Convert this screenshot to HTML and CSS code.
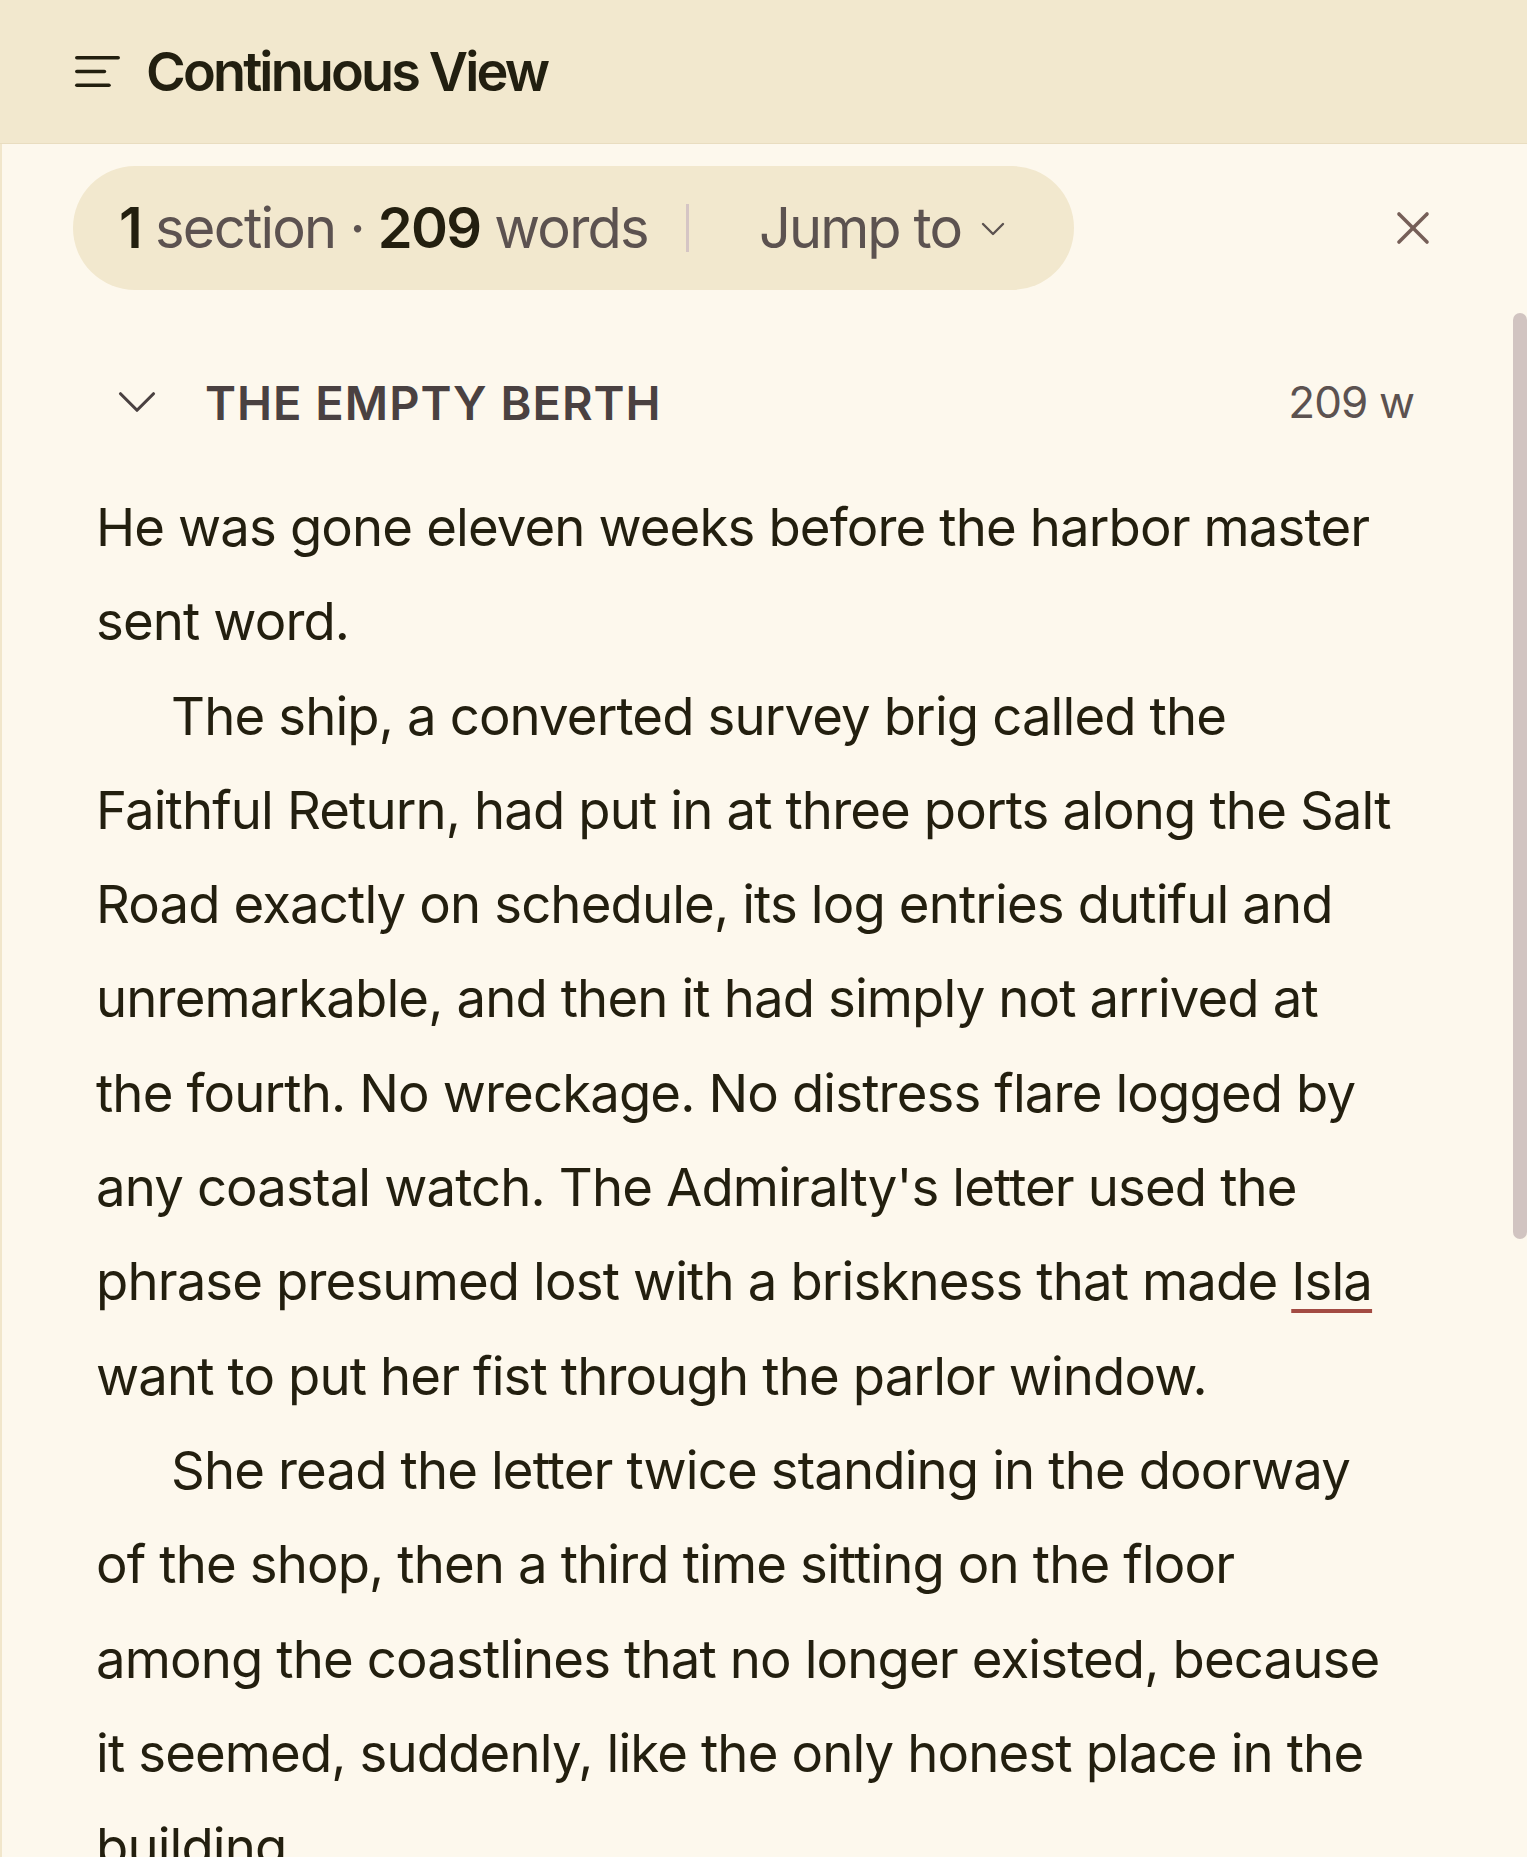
FILE: index.html
```html
<!DOCTYPE html>
<html lang="en">
<head>
<meta charset="utf-8">
<title>Continuous View</title>
<link rel="stylesheet" href="styles.css">
</head>
<body>
<div class="app">
  <header class="topbar">
    <svg class="menu-icon" viewBox="0 0 24 24" fill="none" stroke="currentColor" stroke-width="1.6" stroke-linecap="round">
      <path d="M21 6H3"/><path d="M15 12H3"/><path d="M17 18H3"/>
    </svg>
    <h1 class="title">Continuous View</h1>
  </header>
  <main class="main">
    <div class="toolbar">
      <div class="pill">
        <span class="stat"><b>1</b> section · <b>209</b> words</span>
        <span class="sep"></span>
        <button class="jump">Jump to
          <svg class="jump-chev" viewBox="0 0 26 16" fill="none" stroke="currentColor" stroke-width="2.4" stroke-linecap="round" stroke-linejoin="round"><polyline points="3,3 13,13 23,3"/></svg>
        </button>
      </div>
      <svg class="close" viewBox="0 0 24 24" fill="none" stroke="currentColor" stroke-width="1.55" stroke-linecap="round"><path d="M18 6 6 18"/><path d="m6 6 12 12"/></svg>
    </div>
    <article class="article">
      <div class="section-head">
        <svg class="sec-chev" viewBox="0 0 24 24" fill="none" stroke="currentColor" stroke-width="1.15" stroke-linecap="round" stroke-linejoin="round"><path d="m6 9 6 6 6-6"/></svg>
        <h2 class="sec-title">THE EMPTY BERTH</h2>
        <span class="sec-count">209 w</span>
      </div>
      <div class="prose">
        <p>He was gone eleven weeks before the harbor master sent word.</p>
        <p class="ind">The ship, a converted survey brig called the Faithful Return, had put in at three ports along the Salt Road exactly on schedule, its log entries dutiful and unremarkable, and then it had simply not arrived at the fourth. No wreckage. No distress flare logged by any coastal watch. The Admiralty's letter used the phrase presumed lost with a briskness that made <span class="mark">Isla</span> want to put her fist through the parlor window.</p>
        <p class="ind">She read the letter twice standing in the doorway of the shop, then a third time sitting on the floor among the coastlines that no longer existed, because it seemed, suddenly, like the only honest place in the building.</p>
      </div>
    </article>
    <div class="scroll-thumb"></div>
  </main>
</div>
</body>
</html>
```

FILE: styles.css
```css
* { box-sizing: border-box; }
html, body { margin: 0; padding: 0; }
body {
  background: #fdf8ed;
  font-family: Inter, "Noto Sans", sans-serif;
  color: #231f0f;
  overflow: hidden;
  height: 1857px;
}
.app { display: flex; flex-direction: column; height: 1857px; }

.topbar {
  height: 144px;
  flex: none;
  display: flex;
  align-items: center;
  padding-left: 70px;
  background: #f2e8ce;
  border-bottom: 1px solid #e9ddc0;
}
.menu-icon { width: 55px; height: 55px; color: #231f0f; flex: none; }
.title {
  margin: 0 0 0 21px;
  font-size: 54px;
  font-weight: 600;
  color: #221f10;
  letter-spacing: -2.85px;
}

.main {
  position: relative;
  flex: 1;
  border-left: 2px solid #f1e6cb;
  overflow: hidden;
}
.toolbar {
  display: flex;
  align-items: center;
  justify-content: space-between;
  margin-top: 22px;
  padding: 0 86px 0 71px;
}
.pill {
  height: 124px;
  border-radius: 62px;
  background: #f2e8ce;
  display: flex;
  align-items: center;
  padding: 0 68px 0 46px;
  font-size: 56px;
  letter-spacing: -1.75px;
  color: #5c5250;
}
.stat b { font-weight: 600; color: #231f0f; }
.sep {
  width: 3px;
  height: 48px;
  background: #d5c5c4;
  margin: 0 0 0 38px;
}
.jump {
  border: 0;
  background: none;
  font: inherit;
  letter-spacing: -1.9px;
  color: #5c5250;
  padding: 0;
  margin-left: 70px;
  display: flex;
  align-items: center;
  cursor: pointer;
}
.jump-chev { width: 26px; height: 16px; margin-left: 19px; margin-top: 2px; }
.close { width: 56px; height: 56px; color: #765f58; flex: none; }

.article {
  padding: 0 113px 0 94px;
}
.section-head {
  display: flex;
  align-items: center;
  margin-top: 79px;
  padding-left: 8px;
}
.sec-chev { width: 66px; height: 66px; color: #4a4141; flex: none; }
.sec-title {
  margin: 0 0 0 35px;
  font-size: 47px;
  font-weight: 600;
  letter-spacing: 1.0px;
  color: #4a4141;
  flex: 1;
}
.sec-count {
  font-size: 44px;
  letter-spacing: -0.9px;
  color: #5c5250;
}
.prose {
  margin: 45px 10px 0 0;
  font-size: 52.7px;
  line-height: 94.3px;
  letter-spacing: -0.87px;
  color: #231f0f;
}
.prose p { margin: 0; }
.prose p.ind { text-indent: 75px; }
.mark {
  text-decoration: underline;
  text-decoration-color: #a34b43;
  text-decoration-thickness: 4px;
  text-underline-offset: 9px;
}
.scroll-thumb {
  position: absolute;
  top: 169px;
  right: 0;
  width: 14px;
  height: 926px;
  border-radius: 7px;
  background: #d1c4c1;
}
```
